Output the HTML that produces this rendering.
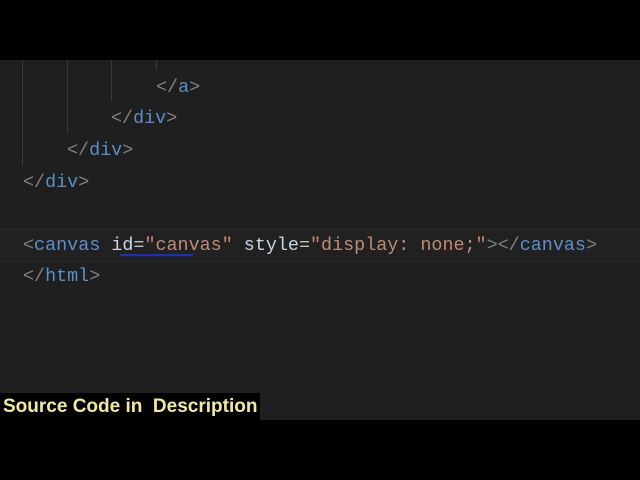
<!DOCTYPE html>
<html><head><style>
html,body{margin:0;padding:0;width:640px;height:480px;background:#000;overflow:hidden}
#ed{position:absolute;left:0;top:60px;width:640px;height:360px;background:#1f1f1f}
.l{position:absolute;left:23px;font-family:"Liberation Mono",monospace;font-size:18.4px;white-space:pre;line-height:20px}
.b{color:#808080}.t{color:#5b8fc9}.a{color:#c6d6e6}.s{color:#c08a78}.p{color:#c0c0c0}
.g{position:absolute;width:1px;background:#3a3a3a}
#cap{position:absolute;left:0;top:393px;width:260px;height:27px;background:#000;color:#f2e9a0;font-family:"Liberation Sans",sans-serif;font-weight:bold;font-size:19px;line-height:27px;padding-left:3px;box-sizing:border-box;white-space:pre}
</style></head><body>
<div id="ed"></div>
<div class="g" style="left:22px;top:60px;height:106px"></div>
<div class="g" style="left:67px;top:60px;height:73px"></div>
<div class="g" style="left:111px;top:60px;height:41px"></div>
<div class="g" style="left:156px;top:60px;height:10px"></div>
<div style="position:absolute;left:0;top:229px;width:640px;height:31px;background:#212121;border-top:1px solid #272727;border-bottom:1px solid #272727"></div>
<div class="l" style="top:78px;left:156px"><span class="b">&lt;/</span><span class="t">a</span><span class="b">&gt;</span></div>
<div class="l" style="top:109px;left:111px"><span class="b">&lt;/</span><span class="t">div</span><span class="b">&gt;</span></div>
<div class="l" style="top:141px;left:67px"><span class="b">&lt;/</span><span class="t">div</span><span class="b">&gt;</span></div>
<div class="l" style="top:173px"><span class="b">&lt;/</span><span class="t">div</span><span class="b">&gt;</span></div>
<div class="l" style="top:236px"><span class="b">&lt;</span><span class="t">canvas</span> <span class="a">id</span><span class="p">=</span><span class="s">"canvas"</span> <span class="a">style</span><span class="p">=</span><span class="s">"display: none;"</span><span class="b">&gt;&lt;/</span><span class="t">canvas</span><span class="b">&gt;</span></div>
<div style="position:absolute;left:120px;top:254px;width:73px;height:2px;background:#1a2fc0"></div>
<div class="l" style="top:267px"><span class="b">&lt;/</span><span class="t">html</span><span class="b">&gt;</span></div>
<div id="cap">Source Code in  Description</div>
</body></html>
